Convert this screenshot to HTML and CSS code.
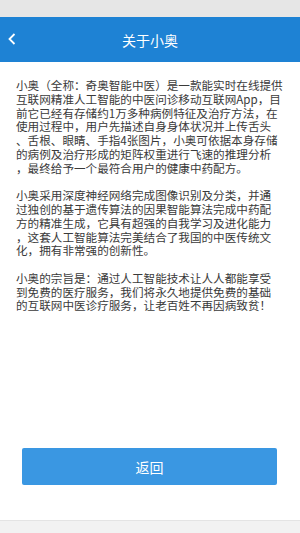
FILE: index.html
```html
<!DOCTYPE html>
<html lang="zh-CN">

<head>
    <meta charset="UTF-8">
    <meta name="viewport" content="width=device-width, initial-scale=1.0">
    <title>关于小奥</title>
    <link rel="stylesheet" href="styles.css">
</head>

<body>
    <div class="screen">
        <div class="status-bar"></div>

        <div class="top-bar">
            <a class="back" href="#">
                <svg width="8" height="12" viewBox="0 0 8 12">
                    <polyline points="6.5,1 1.5,6 6.5,11" fill="none" stroke="#fff" stroke-width="1.8" />
                </svg>
            </a>
            <h1>关于小奥</h1>
        </div>

        <div class="about">
            <p>
                <span>小奥（全称：奇奥智能中医）是一款能实时在线提供</span>
                <span>互联网精准人工智能的中医问诊移动互联网App，目</span>
                <span>前它已经有存储约1万多种病例特征及治疗方法，在</span>
                <span>使用过程中，用户先描述自身身体状况并上传舌头</span>
                <span>、舌根、眼睛、手指4张图片，小奥可依据本身存储</span>
                <span>的病例及治疗形成的矩阵权重进行飞速的推理分析</span>
                <span>，最终给予一个最符合用户的健康中药配方。</span>
            </p>
            <p>
                <span>小奥采用深度神经网络完成图像识别及分类，并通</span>
                <span>过独创的基于遗传算法的因果智能算法完成中药配</span>
                <span>方的精准生成，它具有超强的自我学习及进化能力</span>
                <span>，这套人工智能算法完美结合了我国的中医传统文</span>
                <span>化，拥有非常强的创新性。</span>
            </p>
            <p>
                <span>小奥的宗旨是：通过人工智能技术让人人都能享受</span>
                <span>到免费的医疗服务，我们将永久地提供免费的基础</span>
                <span>的互联网中医诊疗服务，让老百姓不再因病致贫！</span>
            </p>
        </div>

        <div class="actions">
            <button class="btn-back">返回</button>
        </div>

        <div class="nav-bar"></div>
    </div>
</body>

</html>
```

FILE: styles.css
```css
body {
    margin: 0;
    font-family: "Noto Sans CJK SC", "Noto Sans", sans-serif;
    background-color: #fff;
}

.screen {
    width: 300px;
    height: 533px;
    display: flex;
    flex-direction: column;
    overflow: hidden;
}

.status-bar {
    height: 17px;
    background-color: #e6e6e6;
}

.top-bar {
    height: 45px;
    background-color: #1e82d4;
    display: flex;
    align-items: center;
    justify-content: center;
    position: relative;
}

.top-bar h1 {
    margin: 0;
    color: #fff;
    font-size: 14px;
    font-weight: normal;
}

.back {
    position: absolute;
    left: 8px;
    top: 16px;
    display: flex;
}

.about {
    flex: 1;
    padding: 17px 0 0 16px;
    color: #3a3a3a;
    font-size: 11.6px;
    line-height: 13.8px;
}

.about p {
    margin: 0 0 13.6px 0;
}

.about span {
    display: block;
    white-space: nowrap;
}

.actions {
    padding: 0 23px 35px 22px;
}

.btn-back {
    display: block;
    width: 100%;
    height: 37px;
    border: none;
    border-radius: 2px;
    background-color: #3a97e2;
    color: #fff;
    font-family: inherit;
    font-size: 14px;
}

.nav-bar {
    height: 12px;
    background-color: #f2f2f2;
    border-top: 1px solid #e4e4e4;
}
```
